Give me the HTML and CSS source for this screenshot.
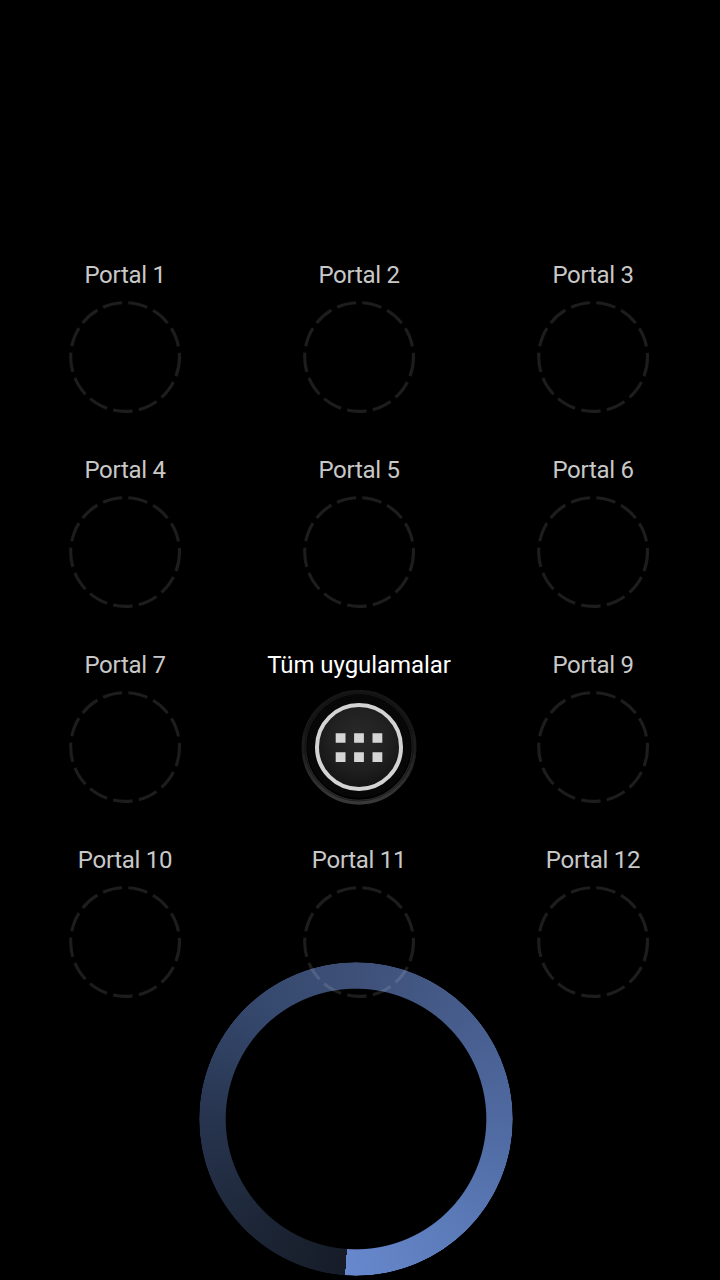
FILE: index.html
```html
<!DOCTYPE html>
<html lang="tr">
<head>
<meta charset="utf-8">
<title>Portal</title>
<link rel="stylesheet" href="styles.css">
</head>
<body>
<svg class="defs" width="0" height="0" aria-hidden="true">
  <symbol id="slot" viewBox="0 0 116 116">
    <circle cx="58.1" cy="58" r="54.4" pathLength="360" fill="none" stroke="#fff" stroke-opacity=".115" stroke-width="3.1" stroke-dasharray="20.6 6.75"/>
  </symbol>
</svg>
<main class="screen">
  <div class="ring"></div>
  <section class="portals">
    <div class="portal"><span class="label">Portal 1</span><svg class="icon"><use href="#slot"/></svg></div>
    <div class="portal"><span class="label">Portal 2</span><svg class="icon"><use href="#slot"/></svg></div>
    <div class="portal"><span class="label">Portal 3</span><svg class="icon"><use href="#slot"/></svg></div>
    <div class="portal"><span class="label">Portal 4</span><svg class="icon"><use href="#slot"/></svg></div>
    <div class="portal"><span class="label">Portal 5</span><svg class="icon"><use href="#slot"/></svg></div>
    <div class="portal"><span class="label">Portal 6</span><svg class="icon"><use href="#slot"/></svg></div>
    <div class="portal"><span class="label">Portal 7</span><svg class="icon"><use href="#slot"/></svg></div>
    <div class="portal active"><span class="label">Tüm uygulamalar</span>
      <svg class="icon" viewBox="0 0 116 116">
        <defs>
          <linearGradient id="rim" x1="0" y1="0" x2="0" y2="1">
            <stop offset="0" stop-color="#121212"/><stop offset=".5" stop-color="#1c1c1c"/><stop offset="1" stop-color="#383838"/>
          </linearGradient>
          <radialGradient id="face" cx=".5" cy=".4" r=".65">
            <stop offset="0" stop-color="#2a2a2a"/><stop offset=".55" stop-color="#202020"/><stop offset="1" stop-color="#101010"/>
          </radialGradient>
          <filter id="soft"><feGaussianBlur stdDeviation=".6"/></filter>
        </defs>
        <circle cx="58" cy="58.2" r="55" fill="none" stroke="url(#rim)" stroke-width="5" filter="url(#soft)"/>
        <circle cx="58" cy="57.8" r="54.2" fill="none" stroke="#101010" stroke-opacity=".7" stroke-width="1"/>
        <circle cx="58" cy="57" r="51.8" fill="#070707"/>
        <circle cx="58" cy="58" r="42" fill="url(#face)" stroke="#d3d3d3" stroke-width="4"/>
        <path fill="#d6d6d6" d="M34.7 44.2h9.8v9.5h-9.8zM53.1 44.2h9.8v9.5h-9.8zM71.5 44.2h9.8v9.5h-9.8zM34.7 63.3h9.8v9.7h-9.8zM53.1 63.3h9.8v9.7h-9.8zM71.5 63.3h9.8v9.7h-9.8z"/>
      </svg>
    </div>
    <div class="portal"><span class="label">Portal 9</span><svg class="icon"><use href="#slot"/></svg></div>
    <div class="portal"><span class="label">Portal 10</span><svg class="icon"><use href="#slot"/></svg></div>
    <div class="portal"><span class="label">Portal 11</span><svg class="icon"><use href="#slot"/></svg></div>
    <div class="portal"><span class="label">Portal 12</span><svg class="icon"><use href="#slot"/></svg></div>
  </section>
</main>
</body>
</html>
```
FILE: styles.css
```css
body {
  margin: 0;
  background: #000;
  font-family: Roboto, "Noto Sans", sans-serif;
}
.defs {
  position: absolute;
}
.screen {
  position: relative;
  box-sizing: border-box;
  width: 720px;
  height: 1280px;
  padding: 259px 10px 0 8px;
  overflow: hidden;
}
.portals {
  position: relative;
  display: grid;
  grid-template-columns: repeat(3, 234px);
  grid-auto-rows: 195px;
}
.portal {
  display: flex;
  flex-direction: column;
  align-items: center;
  gap: 8px;
}
.label {
  height: 32px;
  line-height: 32px;
  font-size: 24px;
  letter-spacing: -0.3px;
  white-space: nowrap;
  color: #c8c8c8;
}
.active .label {
  letter-spacing: -0.06px;
  color: #fff;
}
.icon {
  width: 116px;
  height: 116px;
  flex: none;
}
.ring {
  position: absolute;
  left: 199px;
  top: 962px;
  width: 314px;
  height: 314px;
  border-radius: 50%;
  background: conic-gradient(from 184deg, #161c28 0deg, #1c2535 35deg, #27344e 85deg, #34476b 130deg, #3e5078 175deg, #465c8b 220deg, #4f69a0 265deg, #5a79b6 310deg, #6788cd 360deg);
  -webkit-mask: radial-gradient(circle, transparent 129.8px, #000 130.8px, #000 156.3px, transparent 157.2px);
  mask: radial-gradient(circle, transparent 129.8px, #000 130.8px, #000 156.3px, transparent 157.2px);
}
```
